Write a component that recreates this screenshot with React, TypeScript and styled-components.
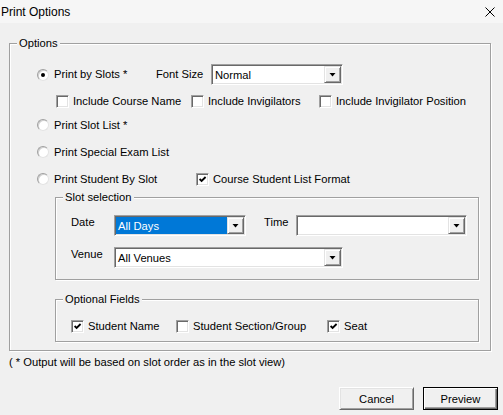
import styled, { createGlobalStyle } from "styled-components";

const GlobalStyle = createGlobalStyle`
  * { box-sizing: border-box; }
  body { margin: 0; background: #f0f0f0; }
`;

const Dialog = styled.div`
  width: 503px;
  height: 415px;
  background: #f0f0f0;
  font-family: "Liberation Sans", Arial, sans-serif;
  font-size: 11.2px;
  color: #000;
  display: flex;
  flex-direction: column;
  overflow: hidden;
`;

const TitleBar = styled.div`
  height: 23px;
  flex: none;
  display: flex;
  align-items: center;
  justify-content: space-between;
  padding: 0 8px 0 1px;
  background: #f6f6f6;
  font-size: 12px;
`;

const Group = styled.fieldset<{ $margin: string }>`
  margin: ${(p) => p.$margin};
  padding: 0;
  min-width: 0;
  border: 1px solid #a0a0a0;
  box-shadow: inset 1px 1px 0 #fff, 1px 1px 0 #fff;
`;

const Caption = styled.legend`
  margin-left: 7px;
  padding: 0 2px;
  line-height: 13px;
  background: #f0f0f0;
`;

const GroupBody = styled.div<{ $pad: string }>`
  padding: ${(p) => p.$pad};
`;

const Row = styled.div<{ $top?: number; $indent?: number; $h?: number }>`
  display: flex;
  align-items: center;
  height: ${(p) => p.$h ?? 20}px;
  margin-top: ${(p) => p.$top ?? 0}px;
  padding-left: ${(p) => p.$indent ?? 0}px;
`;

const Item = styled.label<{ $w?: number }>`
  display: flex;
  align-items: center;
  gap: 4px;
  flex: none;
  width: ${(p) => (p.$w ? `${p.$w}px` : "auto")};
  line-height: 13px;
  white-space: nowrap;
`;

const RadioCircle = styled.span`
  width: 12px;
  height: 12px;
  flex: none;
  margin-right: 1px;
  border-radius: 50%;
  background: #fff;
  border: 1px solid;
  border-color: #a0a0a0 #e3e3e3 #e3e3e3 #a0a0a0;
  box-shadow: inset 1px 1px 0 #d0d0d0;
  display: flex;
  align-items: center;
  justify-content: center;
`;

const RadioDot = styled.span`
  width: 4px;
  height: 4px;
  border-radius: 50%;
  background: #000;
`;

const CheckBox = styled.span`
  width: 13px;
  height: 13px;
  flex: none;
  padding: 1px;
  background: #fff;
  border: 1px solid;
  border-color: #a0a0a0 #fff #fff #a0a0a0;
  box-shadow: inset 1px 1px 0 #696969, inset -1px -1px 0 #e3e3e3;
  display: flex;
`;

const FieldLabel = styled.span<{ $w: number; $gap?: number }>`
  flex: none;
  width: ${(p) => p.$w}px;
  margin-left: ${(p) => p.$gap ?? 0}px;
  line-height: 13px;
  white-space: nowrap;
`;

const SlotLabel = styled(FieldLabel)`
  align-self: flex-start;
  margin-top: 1px;
`;

const Combo = styled.div<{ $w: number }>`
  width: ${(p) => p.$w}px;
  height: 21px;
  flex: none;
  display: flex;
  padding: 1px;
  background: #fff;
  border: 1px solid;
  border-color: #a0a0a0 #fff #fff #a0a0a0;
  box-shadow: inset 1px 1px 0 #696969, inset -1px -1px 0 #e3e3e3;
`;

const ComboText = styled.span<{ $selected?: boolean }>`
  flex: 1;
  display: flex;
  align-items: center;
  padding-left: 2px;
  white-space: nowrap;
  background: ${(p) => (p.$selected ? "#0078d7" : "#fff")};
  color: ${(p) => (p.$selected ? "#fff" : "#000")};
`;

const ComboButton = styled.span`
  width: 17px;
  flex: none;
  display: flex;
  align-items: center;
  justify-content: center;
  background: #f0f0f0;
  border: 1px solid;
  border-color: #e3e3e3 #696969 #696969 #e3e3e3;
  box-shadow: inset 1px 1px 0 #fff, inset -1px -1px 0 #a0a0a0;
`;

const Footnote = styled.div`
  margin-top: 5px;
  padding-left: 9px;
  line-height: 13px;
`;

const ButtonRow = styled.div`
  margin-top: 18px;
  display: flex;
  justify-content: flex-end;
  gap: 9px;
  padding-right: 5px;
`;

const PushButton = styled.button<{ $default?: boolean }>`
  width: 75px;
  height: 23px;
  padding: 0;
  font: inherit;
  color: #000;
  background: #f0f0f0;
  border: 1px solid;
  border-color: ${(p) => (p.$default ? "#000" : "#fff #696969 #696969 #fff")};
  box-shadow: ${(p) =>
    p.$default
      ? "inset 1px 1px 0 #fff, inset -1px -1px 0 #696969, inset -2px -2px 0 #a0a0a0"
      : "inset 1px 1px 0 #e3e3e3, inset -1px -1px 0 #a0a0a0"};
`;

const Radio = ({ checked, label, w }: { checked?: boolean; label: string; w?: number }) => (
  <Item $w={w}>
    <RadioCircle>{checked && <RadioDot />}</RadioCircle>
    {label}
  </Item>
);

const Check = ({ checked, label, w }: { checked?: boolean; label: string; w?: number }) => (
  <Item $w={w}>
    <CheckBox>
      {checked && (
        <svg width="9" height="9" viewBox="0 0 9 9">
          <polyline points="1.6,4 3.6,6 7.6,2" fill="none" stroke="#000" strokeWidth="1.8" />
        </svg>
      )}
    </CheckBox>
    {label}
  </Item>
);

const Select = ({ w, value, selected }: { w: number; value: string; selected?: boolean }) => (
  <Combo $w={w}>
    <ComboText $selected={selected}>{value}</ComboText>
    <ComboButton>
      <svg width="7" height="4" viewBox="0 0 7 4">
        <polygon points="0.5,0 6.5,0 3.5,3.5" fill="#000" />
      </svg>
    </ComboButton>
  </Combo>
);

export default function App() {
  return (
    <Dialog>
      <GlobalStyle />
      <TitleBar>
        <span>Print Options</span>
        <svg width="10" height="10" viewBox="0 0 10 10">
          <path d="M0.5 0.5 L9.5 9.5 M9.5 0.5 L0.5 9.5" stroke="#000" strokeWidth="1" />
        </svg>
      </TitleBar>

      <Group $margin="14px 12px 0 9px">
        <Caption>Options</Caption>
        <GroupBody $pad="14px 0 8px 0">
          <Row $indent={27} $h={21}>
            <Radio checked label="Print by Slots *" w={119} />
            <FieldLabel $w={55}>Font Size</FieldLabel>
            <Select w={132} value="Normal" />
          </Row>
          <Row $top={6} $indent={46}>
            <Check label="Include Course Name" w={135} />
            <Check label="Include Invigilators" w={128} />
            <Check label="Include Invigilator Position" />
          </Row>
          <Row $top={4} $indent={27}>
            <Radio label="Print Slot List *" />
          </Row>
          <Row $top={7} $indent={27}>
            <Radio label="Print Special Exam List" />
          </Row>
          <Row $top={7} $indent={27}>
            <Radio label="Print Student By Slot" w={159} />
            <Check checked label="Course Student List Format" />
          </Row>

          <Group $margin="2px 11px 0 45px">
            <Caption>Slot selection</Caption>
            <GroupBody $pad="11px 0 11px 15px">
              <Row $h={21}>
                <SlotLabel $w={43}>Date</SlotLabel>
                <Select w={132} value="All Days" selected />
                <SlotLabel $w={32} $gap={18}>Time</SlotLabel>
                <Select w={171} value="" />
              </Row>
              <Row $top={11} $h={21}>
                <SlotLabel $w={43}>Venue</SlotLabel>
                <Select w={229} value="All Venues" />
              </Row>
            </GroupBody>
          </Group>

          <Group $margin="13px 11px 0 45px">
            <Caption>Optional Fields</Caption>
            <GroupBody $pad="10px 0 5px 15px">
              <Row>
                <Check checked label="Student Name" w={105} />
                <Check label="Student Section/Group" w={151} />
                <Check checked label="Seat" />
              </Row>
            </GroupBody>
          </Group>
        </GroupBody>
      </Group>

      <Footnote>( * Output will be based on slot order as in the slot view)</Footnote>

      <ButtonRow>
        <PushButton>Cancel</PushButton>
        <PushButton $default>Preview</PushButton>
      </ButtonRow>
    </Dialog>
  );
}
